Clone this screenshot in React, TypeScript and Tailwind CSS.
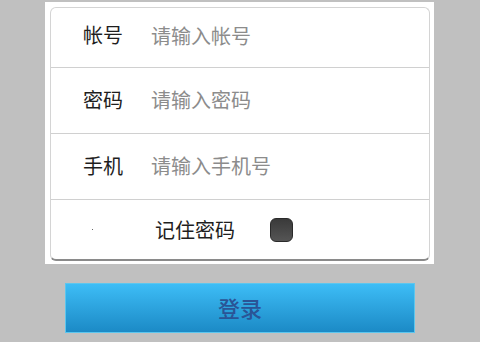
export default function App() {
  const rows = [
    { label: '帐号', hint: '请输入帐号', h: 'h-[60px] pb-[5px]' },
    { label: '密码', hint: '请输入密码', h: 'h-[66px] pb-[2px]' },
    { label: '手机', hint: '请输入手机号', h: 'h-[66px] pb-[2px]' },
  ];

  return (
    <div
      className="w-[480px] h-[342px] bg-[#c0c0c0] overflow-hidden"
      style={{ fontFamily: '"Noto Sans CJK SC", "Noto Sans", sans-serif' }}
    >
      {/* form panel */}
      <div className="ml-[45px] mt-[2px] w-[389px] bg-white pt-[5px] pb-[3px] pl-[5px] pr-[4px]">
        <div className="rounded-[6px] border border-[#d4d4d4] border-b-2 border-b-[#8a8a8a] bg-white">
          {rows.map((r) => (
            <div key={r.label} className={`${r.h} flex items-center border-b border-[#d0d0d0] pl-[32px]`}>
              <span className="w-[68px] text-[20px] text-[#1e1e1e] leading-none">{r.label}</span>
              <input
                placeholder={r.hint}
                className="flex-1 bg-transparent text-[20px] leading-none outline-none placeholder:text-[#8c8c8c]"
              />
            </div>
          ))}

          <div className="h-[59px] flex items-center relative">
            <span className="absolute left-[41px] top-[29px] w-[1px] h-[1px] bg-[#666]" />
            <span className="ml-[104px] text-[20px] text-[#1e1e1e] leading-none">记住密码</span>
            <button className="ml-[35px] w-[23px] h-[24px] rounded-[6px] border border-[#2a2a2a] bg-gradient-to-b from-[#3a3a3a] to-[#555555]" />
          </div>
        </div>
      </div>

      {/* login button */}
      <button className="ml-[65px] mt-[19px] w-[350px] h-[50px] border border-[#5cc6ee] bg-gradient-to-b from-[#3dbdf6] to-[#1b8ac6] text-[22px] font-medium text-[#2a5496] flex items-center justify-center pb-[2px]">
        登录
      </button>
    </div>
  );
}
